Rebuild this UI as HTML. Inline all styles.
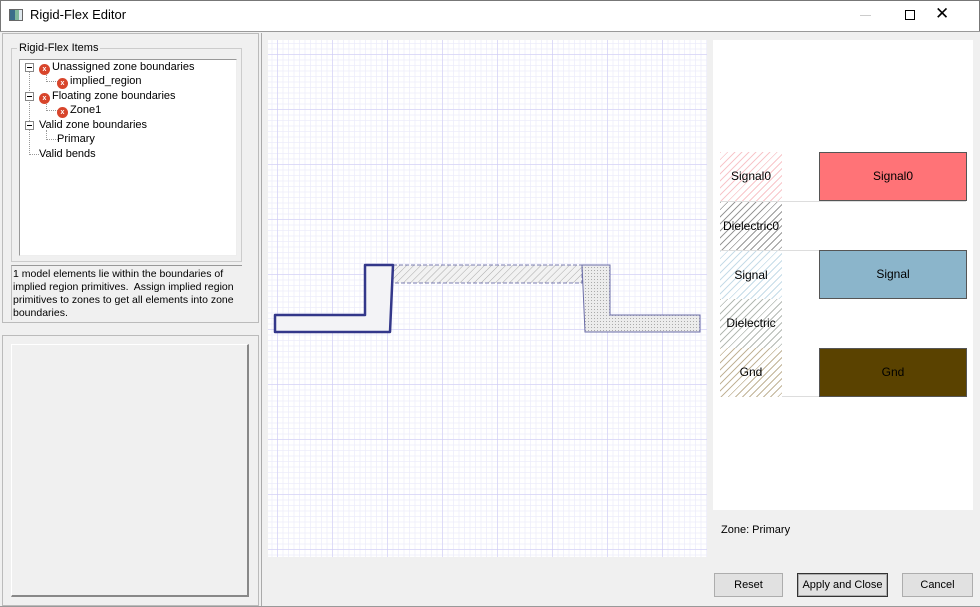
<!DOCTYPE html>
<html><head><style>
*{margin:0;padding:0;box-sizing:border-box}
body{width:980px;height:607px;overflow:hidden;background:#f0f0f0;font-family:"Liberation Sans",Tahoma,sans-serif;font-size:11px;color:#000;position:relative}
.a{position:absolute}
.title{left:0;top:0;width:980px;height:31px;background:#fff;border:1px solid #777;border-bottom:none}
.btn{position:absolute;top:573px;height:24px;background:#e1e1e1;border:1px solid #adadad;text-align:center;line-height:22px;font-size:11px}
.tree div{position:absolute;white-space:nowrap;font-size:11px}
.x{display:inline-block;width:11px;height:11px;border-radius:50%;background:#d8452b;color:#fff;font-size:7px;line-height:11px;text-align:center;font-weight:bold;vertical-align:-1px;margin-right:2px}
.pm{position:absolute;width:9px;height:9px;border:1px solid #888;background:#fff}
.pm:after{content:"";position:absolute;left:1px;top:3px;width:5px;height:1px;background:#000}
.grid{left:268px;top:40px;width:439px;height:517px;background-color:#fff;
background-image:linear-gradient(90deg,rgba(200,195,245,.45) 1px,transparent 1px),linear-gradient(rgba(200,195,245,.45) 1px,transparent 1px),linear-gradient(90deg,rgba(235,235,250,.7) 1px,transparent 1px),linear-gradient(rgba(235,235,250,.7) 1px,transparent 1px);
background-size:55px 55px,55px 55px,5.5px 5.5px,5.5px 5.5px;background-position:9px 14px,9px 14px,9px 14px,9px 14px}
.row{position:absolute;left:720px;width:246px;height:49px}
.hat{position:absolute;left:0;top:0;width:62px;height:49px;text-align:center;line-height:49px;font-size:12px}
.box{position:absolute;left:99px;top:0;width:148px;height:49px;border:1px solid #555;text-align:center;line-height:47px;font-size:12px}
</style></head><body>
<div class="a title"></div>
<div class="a" style="left:9px;top:9px;width:14px;height:12px;background:linear-gradient(90deg,#3a6e8a 0 5px,#7fb89c 5px 9px,#dfe8ee 9px);border:1px solid #666"></div>
<div class="a" style="left:30px;top:7px;font-size:13px">Rigid-Flex Editor</div>
<div class="a" style="left:860px;top:15px;width:11px;height:1px;background:#ccc"></div>
<div class="a" style="left:905px;top:10px;width:10px;height:10px;border:1px solid #000"></div>
<div class="a" style="left:935px;top:4px;font-size:17px;line-height:20px">✕</div>
<div class="a" style="left:0;top:31px;width:980px;height:1px;background:#999"></div>

<div class="a" style="left:2px;top:33px;width:257px;height:290px;border:1px solid #bbb"></div>
<div class="a" style="left:11px;top:48px;width:231px;height:214px;border:1px solid #ccc"></div>
<div class="a" style="left:17px;top:42px;background:#f0f0f0;padding:0 2px">Rigid-Flex Items</div>
<div class="a" style="left:19px;top:59px;width:218px;height:197px;background:#fff;border:1px solid #999;border-right-color:#eee;border-bottom-color:#eee"></div>
<div class="a tree">
<div style="left:29px;top:63px;width:1px;height:92px;border-left:1px dotted #999"></div>
<div style="left:46px;top:72px;width:1px;height:10px;border-left:1px dotted #999"></div>
<div style="left:46px;top:81px;width:12px;border-top:1px dotted #999"></div>
<div style="left:46px;top:101px;width:1px;height:10px;border-left:1px dotted #999"></div>
<div style="left:46px;top:110px;width:12px;border-top:1px dotted #999"></div>
<div style="left:46px;top:130px;width:1px;height:10px;border-left:1px dotted #999"></div>
<div style="left:46px;top:139px;width:12px;border-top:1px dotted #999"></div>
<div style="left:29px;top:154px;width:10px;border-top:1px dotted #999"></div>
<span class="pm" style="left:25px;top:63px"></span>
<span class="pm" style="left:25px;top:92px"></span>
<span class="pm" style="left:25px;top:121px"></span>
<div style="left:39px;top:61px"><span class="x">x</span>Unassigned zone boundaries</div>
<div style="left:57px;top:75px"><span class="x">x</span>implied_region</div>
<div style="left:39px;top:90px"><span class="x">x</span>Floating zone boundaries</div>
<div style="left:57px;top:104px"><span class="x">x</span>Zone1</div>
<div style="left:39px;top:119px">Valid zone boundaries</div>
<div style="left:57px;top:133px">Primary</div>
<div style="left:39px;top:148px">Valid bends</div>
</div>
<div class="a" style="left:11px;top:265px;width:231px;height:55px;border-top:1px solid #999;border-left:1px solid #bbb;padding:2px 1px;line-height:13px;white-space:nowrap;font-size:10.5px">1 model elements lie within the boundaries of<br>implied region primitives.&nbsp; Assign implied region<br>primitives to zones to get all elements into zone<br>boundaries.</div>

<div class="a" style="left:2px;top:335px;width:257px;height:271px;border:1px solid #bbb"></div>
<div class="a" style="left:11px;top:344px;width:238px;height:253px;border:1px solid #fff;border-right:2px solid #888;border-bottom:2px solid #888"></div>
<div class="a" style="left:261px;top:33px;width:1px;height:574px;background:#aaa"></div>

<div class="a grid"></div>
<svg class="a" style="left:0;top:0" width="980" height="607">
<defs>
<pattern id="h" width="5" height="5" patternUnits="userSpaceOnUse" patternTransform="rotate(45)"><rect width="5" height="5" fill="#f2f2f2"/><line x1="0" y1="0" x2="0" y2="5" stroke="#aaa" stroke-width="1"/></pattern>
<pattern id="d" width="3" height="3" patternUnits="userSpaceOnUse"><rect width="3" height="3" fill="#ececec"/><rect width="1" height="1" fill="#aaa"/></pattern>
</defs>
<rect x="393" y="265" width="189" height="18" fill="url(#h)" stroke="#7a7cb0" stroke-dasharray="4 2"/>
<path d="M582 265 L610 265 L610 315 L700 315 L700 332 L585 332 Z" fill="url(#d)" stroke="#6a6ca8" stroke-width="1"/>
<path d="M275 315 L365 315 L365 265 L393 265 L390 332 L275 332 Z" fill="#f3f3f6" stroke="#33378a" stroke-width="2.5" stroke-linejoin="round"/>
</svg>

<div class="a" style="left:713px;top:40px;width:260px;height:470px;background:#fff"></div>
<div class="row" style="top:152px"><div class="hat" style="background:repeating-linear-gradient(135deg,#f8c6ca 0 1px,#fff 1px 5px)">Signal0</div><div class="box" style="background:#ff7377">Signal0</div></div>
<div class="row" style="top:201px;border-top:1px solid #ddd"><div class="hat" style="background:repeating-linear-gradient(135deg,#999 0 1px,#fff 1px 5px)">Dielectric0</div></div>
<div class="row" style="top:250px;border-top:1px solid #ddd"><div class="hat" style="background:repeating-linear-gradient(135deg,#c6dce8 0 1px,#fff 1px 5px)">Signal</div><div class="box" style="background:#8bb5cb;top:-1px">Signal</div></div>
<div class="row" style="top:299px"><div class="hat" style="background:repeating-linear-gradient(135deg,#b4bab4 0 1px,#fff 1px 5px)">Dielectric</div></div>
<div class="row" style="top:348px;border-bottom:1px solid #ddd"><div class="hat" style="background:repeating-linear-gradient(135deg,#c2b498 0 1px,#fff 1px 5px)">Gnd</div><div class="box" style="background:#5a4200">Gnd</div></div>

<div class="a" style="left:721px;top:524px">Zone: Primary</div>
<div class="btn" style="left:714px;width:69px">Reset</div>
<div class="btn" style="left:797px;width:91px;border:1px solid #333;box-shadow:inset 0 0 0 1px #adadad">Apply and Close</div>
<div class="btn" style="left:902px;width:71px">Cancel</div>
<div class="a" style="left:0;top:606px;width:980px;height:1px;background:#999"></div>
</body></html>
